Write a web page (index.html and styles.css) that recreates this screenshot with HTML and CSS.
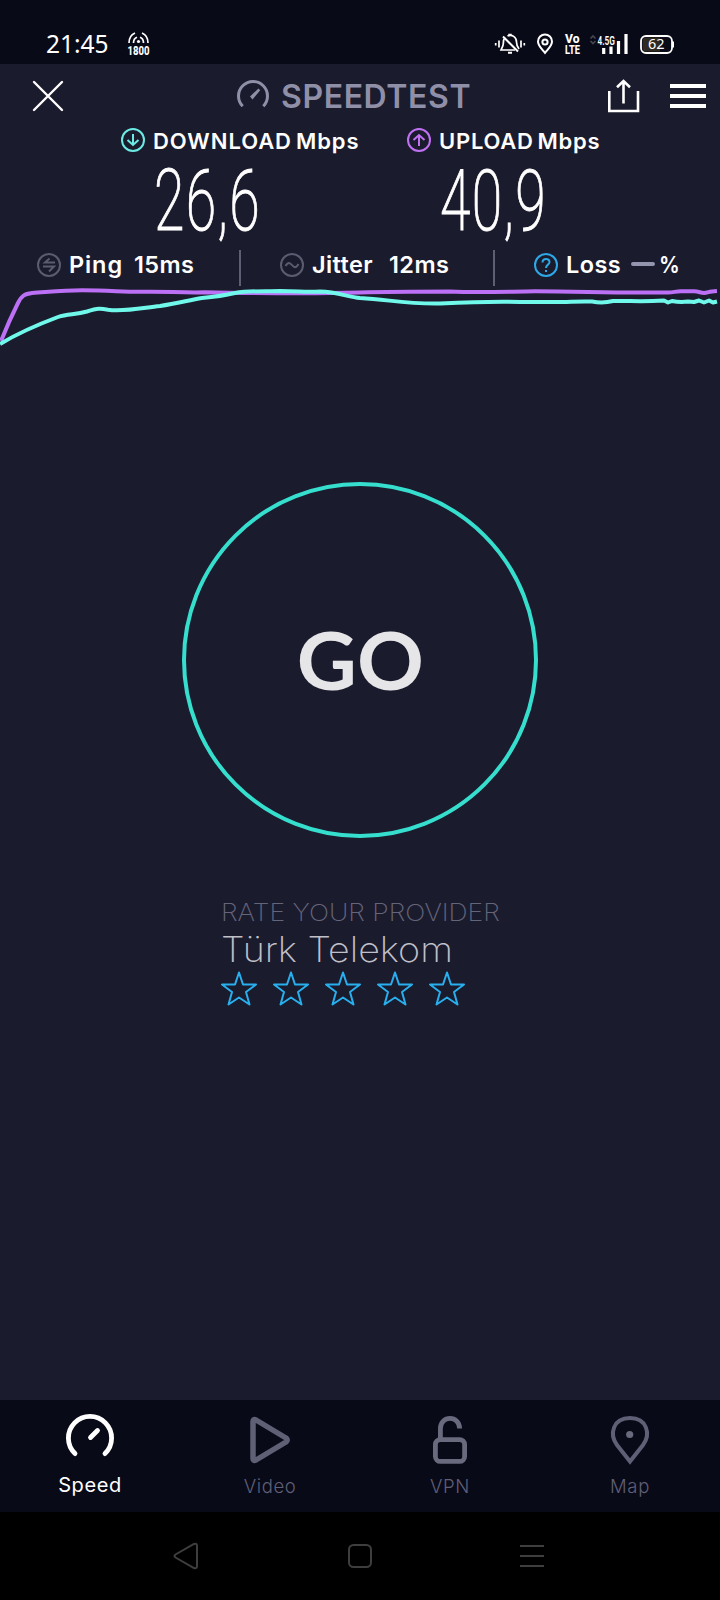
FILE: index.html
```html
<!DOCTYPE html>
<html lang="en">
<head>
<meta charset="utf-8">
<title>Speedtest</title>
<link rel="stylesheet" href="styles.css">
</head>
<body>
<div class="status">
  <span class="clock">21:45</span>
  <svg class="net" width="26" height="30" viewBox="125 31 26 30">
    <g fill="none" stroke="#fff" stroke-width="1.7">
      <path d="M129 43C129 38 131.500 34.500 135 33M148 43C148 38 145.500 34.500 142 33M133.500 43C133.500 40 135 38 137 37.300M143.500 43C143.500 40 142 38 140 37.300"/>
    </g>
    <circle cx="138.500" cy="41.500" r="1.600" fill="#fff"/>
    <text class="tiny" x="127.500" y="55" font-size="12.500" textLength="22" lengthAdjust="spacingAndGlyphs">1800</text>
  </svg>
  <div class="indicators">
    <svg width="32" height="24" viewBox="494 32 32 24" fill="none" stroke="#fff" stroke-width="1.700">
      <path d="M495.700 43v2.500M499 40.500v7M521 40.500v7M524.300 43v2.500"/>
      <path d="M505 37.500C503.500 39 503.300 41 503.300 43.500C503.300 46 502 47.500 501 50H515M507.500 36C512 34 516.500 37 516.500 42C516.500 45.500 517 46.500 519 49"/>
      <path d="M503 36.500L518 51.500M508.300 34.800h3.400M508 52.800h4" stroke-width="2"/>
    </svg>
    <svg width="18" height="24" viewBox="536 32 18 24" fill="none" stroke="#fff" stroke-width="2">
      <path d="M545 53C541 48 538 45.500 538 41.500a7 7 0 0 1 14 0C552 45.500 549 48 545 53Z"/>
      <circle cx="545" cy="42" r="2.600"/>
    </svg>
    <svg width="18" height="28" viewBox="564 32 18 28">
      <text class="tiny" x="565" y="43.300" font-size="12" textLength="14.500" lengthAdjust="spacingAndGlyphs">Vo</text>
      <text class="tiny" x="565" y="54" font-size="12.500" textLength="15" lengthAdjust="spacingAndGlyphs">LTE</text>
    </svg>
    <svg width="40" height="24" viewBox="589 32 40 24">
      <path d="M590.500 38.500l2.500-2.500 2.500 2.500M590.500 41l2.500 2.500 2.500-2.500" fill="none" stroke="#45464f" stroke-width="1.700"/>
      <text class="tiny light" x="597.500" y="45" font-size="12" textLength="17.500" lengthAdjust="spacingAndGlyphs">4.5G</text>
      <path d="M603.700 48v6M611 46.500v7.500M618.500 41v13M626 34v20" stroke="#fff" stroke-width="3.200"/>
    </svg>
    <svg width="36" height="24" viewBox="639 32 36 24">
      <rect x="641" y="36" width="31" height="17" rx="5" fill="#0a0b18" stroke="#fff" stroke-width="1.800"/>
      <path d="M646 37.500H660V51.500H646a3.500 3.500 0 0 1-3.500-3.500V41a3.500 3.500 0 0 1 3.500-3.500Z" fill="#302b22"/>
      <path d="M673 41.500v6" stroke="#fff" stroke-width="2"/>
      <text class="batt" x="648" y="49.300" font-size="14.500" textLength="16.500" lengthAdjust="spacingAndGlyphs">62</text>
    </svg>
  </div>
</div>

<header class="header">
  <svg class="close" width="32" height="32" viewBox="0 0 32 32"><path d="M2 2L30 30M30 2L2 30" stroke="#fff" stroke-width="2.400" stroke-linecap="round"/></svg>
  <svg class="gauge" width="34" height="34" viewBox="236 79 34 34">
    <path d="M242.700 106.200A14.500 14.500 0 1 1 263.300 106.200" fill="none" stroke="#8f90a8" stroke-width="3"/>
    <path d="M250 96.500L258.500 88.500L260.200 90.200L252.500 99.500Z" fill="#8f90a8"/>
  </svg>
  <h1 class="brand">SPEEDTEST</h1>
  <svg class="share" width="34" height="34" viewBox="607 79 34 34" fill="none" stroke="#fff" stroke-width="2.600">
    <path d="M609.300 91V111H638V91M623.500 103.500V81M617 87.300L623.500 81L630 87.300"/>
  </svg>
  <svg class="menu" width="36" height="24" viewBox="0 0 36 24"><path d="M0 2H36M0 12H36M0 22H36" stroke="#fff" stroke-width="4"/></svg>
</header>

<section class="results">
  <div class="result down">
    <div class="label">
      <svg width="24" height="24" viewBox="0 0 24 24" fill="none" stroke="#6bebe3" stroke-width="2"><circle cx="12" cy="12" r="11"/><path d="M12 6V17M6.500 12L12 17L17.500 12"/></svg>
      <span class="caption">DOWNLOAD Mbps</span>
    </div>
    <div class="value"><span>26,6</span></div>
  </div>
  <div class="result up">
    <div class="label">
      <svg width="24" height="24" viewBox="0 0 24 24" fill="none" stroke="#bf71f2" stroke-width="2"><circle cx="12" cy="12" r="11"/><path d="M12 18V7M6.500 12L12 7L17.500 12"/></svg>
      <span class="caption">UPLOAD Mbps</span>
    </div>
    <div class="value"><span>40,9</span></div>
  </div>
</section>

<section class="stats">
  <div class="stat ping">
    <svg width="24" height="24" viewBox="0 0 24 24" fill="none" stroke="#5c5c70" stroke-width="2"><circle cx="12" cy="12" r="11"/><path d="M18 9.500H8L12.500 5.500M6 13.500H17L12 18.500M7 13.500H17"/></svg>
    <span class="name">Ping</span><span class="num">15ms</span>
  </div>
  <div class="stat jitter">
    <svg width="24" height="24" viewBox="0 0 24 24" fill="none" stroke="#5c5c70" stroke-width="2"><circle cx="12" cy="12" r="11"/><path d="M5.500 13C8 8.500 10 9.500 12 12S16 15.500 18.500 11"/></svg>
    <span class="name">Jitter</span><span class="num">12ms</span>
  </div>
  <div class="stat loss">
    <svg width="24" height="24" viewBox="0 0 24 24" fill="none" stroke="#2ca9e6" stroke-width="2"><circle cx="12" cy="12" r="11"/><path d="M8.500 9.500C8.500 4.800 15.500 4.800 15.500 9C15.500 11.800 12 11.500 12 15M12 17V19"/></svg>
    <span class="name">Loss</span><i class="dash"></i><span class="pct">%</span>
  </div>
</section>

<svg class="chart" width="720" height="64" viewBox="0 286 720 64" fill="none" stroke-width="4" stroke-linejoin="round">
  <path stroke="#bb70f5" d="M1 341C7 326 13 313 18 303C22 295 25 294 32 293C48 292 62 290.300 82 290.300C110 290.300 120 291.800 140 291.800C165 291 180 293 205 292.300C260 293 300 294 360 292.500C390 291.500 420 291.500 450 291.500C480 293 510 291.500 535 291.300C575 291.300 600 292.500 640 292.500H668C674 292.500 676 291 682 291.300H694C700 291.500 702 294 707 292.500C710 291 713 291.300 717 291"/>
  <path stroke="#70f8eb" d="M0 344C20 332 42 323 58 317C68 313.500 75 315 87 311.500C98 308 101 308.500 108 309.800C123 312 139 308.500 160 306C178 303 190 300 202 298C218 296.500 222 296 235 293C250 290.500 265 291.500 280 291C300 291 304 292.500 320 291.500C338 292 348 297 360 298C390 299.500 402 304 440 303.500C472 302 490 301.300 520 302H555C570 302 578 301 592 301.500C600 303 607 302.500 613 301C630 300.500 638 302 664 300.500L668 302.500L672 301C680 302.500 684 302 688 301.500L694 302L699 300.500L704 302.500L709 300.500L713 302.500L717 301.500"/>
</svg>

<main class="main">
  <button class="go"><span>GO</span></button>
  <div class="provider">
    <div class="rate">RATE YOUR PROVIDER</div>
    <div class="isp">Türk Telekom</div>
    <div class="stars">
      <svg width="36" height="35" viewBox="0 0 36 35"><path class="star" d="M18 1.500L22 13.500H35L25 21L28.500 33.500L18 26.500L7.500 33.500L11 21L1 13.500H14Z"/></svg>
      <svg width="36" height="35" viewBox="0 0 36 35"><path class="star" d="M18 1.500L22 13.500H35L25 21L28.500 33.500L18 26.500L7.500 33.500L11 21L1 13.500H14Z"/></svg>
      <svg width="36" height="35" viewBox="0 0 36 35"><path class="star" d="M18 1.500L22 13.500H35L25 21L28.500 33.500L18 26.500L7.500 33.500L11 21L1 13.500H14Z"/></svg>
      <svg width="36" height="35" viewBox="0 0 36 35"><path class="star" d="M18 1.500L22 13.500H35L25 21L28.500 33.500L18 26.500L7.500 33.500L11 21L1 13.500H14Z"/></svg>
      <svg width="36" height="35" viewBox="0 0 36 35"><path class="star" d="M18 1.500L22 13.500H35L25 21L28.500 33.500L18 26.500L7.500 33.500L11 21L1 13.500H14Z"/></svg>
    </div>
  </div>
</main>

<nav class="tabs">
  <a class="tab active">
    <svg width="52" height="52" viewBox="64 1412 52 52" fill="none" stroke="#fff" stroke-width="4.800" stroke-linecap="round"><path d="M75 1453.600A21.600 21.600 0 1 1 105 1453.600M90.500 1437.500L97.500 1430.500"/></svg>
    <span>Speed</span>
  </a>
  <a class="tab">
    <svg width="52" height="52" viewBox="244 1412 52 52" fill="none" stroke="#5f5f76" stroke-width="5.500" stroke-linejoin="round"><path d="M253 1421.500Q253 1418.500 256 1420L286 1438Q288.500 1440 286 1442L256 1460Q253 1461.500 253 1458.500Z"/></svg>
    <span>Video</span>
  </a>
  <a class="tab">
    <svg width="52" height="52" viewBox="424 1412 52 52" fill="none" stroke="#6a6a7e" stroke-width="4.800"><rect x="435.400" y="1439.600" width="29.200" height="21.800" rx="5"/><path d="M440.400 1438V1428.500C440.400 1415 459.600 1415 459.600 1428.500"/></svg>
    <span>VPN</span>
  </a>
  <a class="tab">
    <svg width="52" height="52" viewBox="604 1412 52 52"><path d="M630 1461.500L617 1445C609 1434 613 1418 630 1418S651 1434 643 1445Z" fill="none" stroke="#5f5f76" stroke-width="4"/><circle cx="629.700" cy="1434.500" r="3.600" fill="#6a6a7e"/></svg>
    <span>Map</span>
  </a>
</nav>

<div class="sysnav">
  <svg width="26" height="28" viewBox="0 0 26 28"><path d="M2.500 12.500L21 2Q24 .8 24 4V24Q24 27 21 26L2.500 15.500Q.5 14 2.500 12.500Z"/></svg>
  <svg width="24" height="24" viewBox="0 0 24 24"><rect x="1" y="1" width="22" height="22" rx="4.500"/></svg>
  <svg width="24" height="24" viewBox="0 0 24 24"><path d="M0 2H24M0 12H24M0 22H24"/></svg>
</div>
</body>
</html>
```

FILE: styles.css
```css
* { box-sizing: border-box; }
body {
  margin: 0;
  width: 720px;
  height: 1600px;
  display: flex;
  flex-direction: column;
  background: #1b1b2e;
  color: #fff;
  font-family: Inter, "Liberation Sans", sans-serif;
  overflow: hidden;
}
svg { display: block; flex: none; overflow: visible; }
span, h1, .rate, .isp { white-space: nowrap; }

.status {
  height: 64px;
  background: #090a18;
  display: flex;
  align-items: flex-start;
  padding: 31px 45px 0 46px;
}
.clock {
  width: 79px;
  font: 400 24.500px/25px "Noto Sans", sans-serif;
}
.tiny { font-family: Roboto, sans-serif; font-weight: 800; fill: #fff; }
.light { font-weight: 600; }
.batt { font-family: "Noto Sans", sans-serif; fill: #fff; }
.indicators {
  margin-left: auto;
  margin-top: 1px;
  display: flex;
  gap: 10px;
}
.indicators svg:nth-child(4) { margin-left: -3px; }

.header {
  height: 60px;
  display: flex;
  align-items: flex-start;
  padding: 0 14px 0 32px;
}
.close { margin-top: 16px; }
.gauge { margin: 15px 0 0 172px; }
.brand {
  margin: 13px 0 0 11px;
  width: 326px;
  font-size: 32px;
  line-height: 40px;
  font-weight: 600;
  letter-spacing: .6px;
  color: #8f90a8;
}
.share { margin-top: 15px; }
.menu { margin: 20px 0 0 29px; }

.results { display: flex; height: 126px; padding-left: 121px; }
.result { width: 286px; }
.up { width: 300px; }
.label { display: flex; gap: 8px; height: 32px; align-items: center; }
.caption {
  font-size: 22px;
  font-weight: 600;
  line-height: 32px;
  letter-spacing: .95px;
  word-spacing: -2.500px;
  padding-top: 2px;
}
.up .caption { letter-spacing: .75px; }
.value {
  height: 90px;
  padding-left: 33px;
  font: 200 85px/90px Roboto, sans-serif;
}
.value span {
  display: inline-block;
  letter-spacing: 2px;
  -webkit-text-stroke: 1px #fff;
  transform: scaleX(.65);
  transform-origin: 0 50%;
}

.stats { display: flex; height: 36px; }
.stat {
  display: flex;
  align-items: center;
  padding-bottom: 6px;
  font-size: 23.500px;
  font-weight: 600;
}
.name, .num, .pct { margin-top: -2px; letter-spacing: .4px; }
.name { margin-left: 8px; }
.pct { display: inline-block; transform: scaleX(.88); transform-origin: 0 50%; }
.ping { width: 241px; padding-left: 37px; border-right: 2px solid #5f5f73; }
.ping .name { width: 65px; letter-spacing: .9px; }
.jitter { width: 254px; padding-left: 39px; border-right: 2px solid #5f5f73; }
.jitter .name { width: 77px; }
.loss { padding-left: 39px; }
.loss .name { width: 65px; }
.dash { width: 24px; height: 4px; border-radius: 2px; background: #9394ad; margin: -2px 4px 0 0; }

.main { flex: 1; display: flex; flex-direction: column; align-items: center; padding-top: 132px; }
.go {
  width: 356px;
  height: 356px;
  padding: 0 0 3px;
  border: 4px solid #36dece;
  border-radius: 50%;
  background: none;
  color: #e6e6e9;
  font: 700 80px/80px Lato, sans-serif;
}
.go span { display: inline-block; transform: scaleX(1.035); }
.provider { width: 280px; margin: 60px 0 0 4px; }
.rate, .isp { transform-origin: 0 50%; }
.rate { margin-left: -1px; font-size: 23.500px; line-height: 29px; font-weight: 200; color: #65657a; transform: scaleX(1.13); }
.isp { margin-left: -1px; font-size: 35px; line-height: 45px; font-weight: 200; color: #c0c0c9; transform: scaleX(1.075); }
.stars { display: flex; gap: 16px; margin: -1px 0 0 -1px; }
.star { fill: none; stroke: #28b0ee; stroke-width: 2; stroke-linejoin: round; }

.tabs { height: 112px; background: #090a18; display: flex; }
.tab {
  flex: 1;
  display: flex;
  flex-direction: column;
  align-items: center;
  padding-top: 12px;
  color: #5f5f76;
  font-size: 18.500px;
  line-height: 24px;
  font-weight: 300;
  letter-spacing: .6px;
}
.tab span { margin-top: 9.500px; }
.active { color: #fff; font-size: 20px; font-weight: 400; }
.active span { margin-top: 9px; }

.sysnav {
  height: 88px;
  background: #000;
  display: flex;
  justify-content: space-between;
  align-items: center;
  padding: 0 176px 0 173px;
}
.sysnav svg { fill: none; stroke: #3e3e3e; stroke-width: 2; }
```
